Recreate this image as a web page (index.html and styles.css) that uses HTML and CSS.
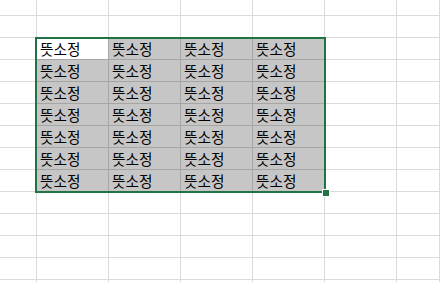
FILE: index.html
```html
<!DOCTYPE html>
<html lang="ko">
<head>
<meta charset="utf-8">
<link rel="stylesheet" href="styles.css">
</head>
<body>
<div class="sheet">
  <div class="grid">
    <div class="c"></div><div class="c"></div><div class="c"></div><div class="c"></div><div class="c"></div><div class="c"></div><div class="c"></div>
    <div class="c"></div><div class="c"></div><div class="c"></div><div class="c"></div><div class="c"></div><div class="c"></div><div class="c"></div>
    <div class="c"></div><div class="c active">뜻소정</div><div class="c sel">뜻소정</div><div class="c sel">뜻소정</div><div class="c sel">뜻소정</div><div class="c"></div><div class="c"></div>
    <div class="c"></div><div class="c sel">뜻소정</div><div class="c sel">뜻소정</div><div class="c sel">뜻소정</div><div class="c sel">뜻소정</div><div class="c"></div><div class="c"></div>
    <div class="c"></div><div class="c sel">뜻소정</div><div class="c sel">뜻소정</div><div class="c sel">뜻소정</div><div class="c sel">뜻소정</div><div class="c"></div><div class="c"></div>
    <div class="c"></div><div class="c sel">뜻소정</div><div class="c sel">뜻소정</div><div class="c sel">뜻소정</div><div class="c sel">뜻소정</div><div class="c"></div><div class="c"></div>
    <div class="c"></div><div class="c sel">뜻소정</div><div class="c sel">뜻소정</div><div class="c sel">뜻소정</div><div class="c sel">뜻소정</div><div class="c"></div><div class="c"></div>
    <div class="c"></div><div class="c sel">뜻소정</div><div class="c sel">뜻소정</div><div class="c sel">뜻소정</div><div class="c sel">뜻소정</div><div class="c"></div><div class="c"></div>
    <div class="c"></div><div class="c sel">뜻소정</div><div class="c sel">뜻소정</div><div class="c sel">뜻소정</div><div class="c sel">뜻소정</div><div class="c"></div><div class="c"></div>
    <div class="c"></div><div class="c"></div><div class="c"></div><div class="c"></div><div class="c"></div><div class="c"></div><div class="c"></div>
    <div class="c"></div><div class="c"></div><div class="c"></div><div class="c"></div><div class="c"></div><div class="c"></div><div class="c"></div>
    <div class="c"></div><div class="c"></div><div class="c"></div><div class="c"></div><div class="c"></div><div class="c"></div><div class="c"></div>
    <div class="c"></div><div class="c"></div><div class="c"></div><div class="c"></div><div class="c"></div><div class="c"></div><div class="c"></div>
    <div class="c"></div><div class="c"></div><div class="c"></div><div class="c"></div><div class="c"></div><div class="c"></div><div class="c"></div>
  </div>
  <div class="selection"><span class="handle"></span></div>
</div>
</body>
</html>
```

FILE: styles.css
```css
html, body {
  margin: 0;
  padding: 0;
  background: #ffffff;
  overflow: hidden;
}
.sheet {
  position: relative;
  width: 440px;
  height: 282px;
  overflow: hidden;
}
.grid {
  display: grid;
  grid-template-columns: 37px repeat(5, 72px) 1fr;
  grid-template-rows: 16px;
  grid-auto-rows: 22px;
}
.c {
  box-sizing: border-box;
  border-right: 1px solid #dadada;
  border-bottom: 1px solid #dadada;
  font-family: "Noto Sans CJK KR", "Noto Sans", sans-serif;
  font-size: 14.67px;
  line-height: 16px;
  color: #000000;
  padding: 3px 0 0 3px;
  white-space: nowrap;
  overflow: hidden;
}
.c.sel {
  background: #c6c6c6;
  border-color: #a6a6a6;
}
.c.active {
  background: #ffffff;
  border-right-color: #a6a6a6;
  border-bottom-color: #a6a6a6;
}
.selection {
  position: absolute;
  left: 35px;
  top: 37px;
  width: 291px;
  height: 156px;
  box-sizing: border-box;
  border: 2px solid #217346;
  pointer-events: none;
}
.handle {
  position: absolute;
  right: -6px;
  bottom: -6px;
  width: 6px;
  height: 6px;
  background: #217346;
  border: 1px solid #ffffff;
}
```
